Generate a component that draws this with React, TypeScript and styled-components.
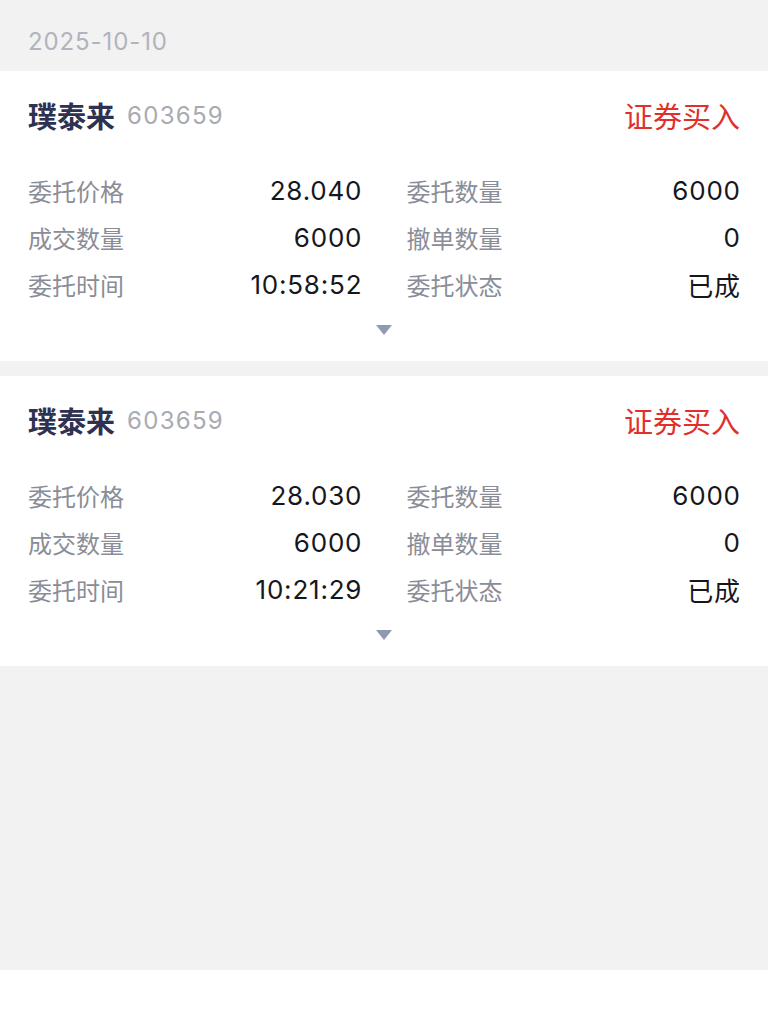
import { FunctionComponent } from "react";
import styled, { createGlobalStyle } from "styled-components";

const GlobalStyle = createGlobalStyle`
  html, body {
    margin: 0;
    padding: 0;
    background: #f2f2f2;
  }
  * {
    box-sizing: border-box;
  }
  body {
    font-family: Inter, "Noto Sans CJK SC", sans-serif;
    -webkit-font-smoothing: antialiased;
  }
`;

type Order = {
  name: string;
  code: string;
  side: string;
  price: string;
  amount: string;
  filled: string;
  cancelled: string;
  time: string;
  status: string;
};

const ORDERS: Order[] = [
  {
    name: "璞泰来",
    code: "603659",
    side: "证券买入",
    price: "28.040",
    amount: "6000",
    filled: "6000",
    cancelled: "0",
    time: "10:58:52",
    status: "已成",
  },
  {
    name: "璞泰来",
    code: "603659",
    side: "证券买入",
    price: "28.030",
    amount: "6000",
    filled: "6000",
    cancelled: "0",
    time: "10:21:29",
    status: "已成",
  },
];

const OrderCard: FunctionComponent<{ order: Order }> = ({ order }) => {
  const fields = [
    ["委托价格", order.price],
    ["委托数量", order.amount],
    ["成交数量", order.filled],
    ["撤单数量", order.cancelled],
    ["委托时间", order.time],
    ["委托状态", order.status],
  ];

  return (
    <Styles.Card>
      <Styles.Header>
        <Styles.Stock>
          <Styles.Name>{order.name}</Styles.Name>
          <Styles.Code>{order.code}</Styles.Code>
        </Styles.Stock>
        <Styles.Side>{order.side}</Styles.Side>
      </Styles.Header>
      <Styles.Grid>
        {fields.map(([label, value]) => (
          <Styles.Field key={label}>
            <Styles.Label>{label}</Styles.Label>
            <Styles.Value>{value}</Styles.Value>
          </Styles.Field>
        ))}
      </Styles.Grid>
      <Styles.Expand>
        <Styles.Caret />
      </Styles.Expand>
    </Styles.Card>
  );
};

export default function App() {
  return (
    <>
      <GlobalStyle />
      <Styles.Page>
        <Styles.DateBar>2025-10-10</Styles.DateBar>
        <Styles.List>
          {ORDERS.map((order, i) => (
            <OrderCard key={i} order={order} />
          ))}
        </Styles.List>
        <Styles.Spacer />
        <Styles.Footer />
      </Styles.Page>
    </>
  );
}

const Styles = {
  Page: styled.div`
    min-height: 1030px;
    display: flex;
    flex-direction: column;
    background: #f2f2f2;
  `,

  DateBar: styled.div`
    height: 71px;
    padding: 27px 28px 0;
    font-size: 24px;
    line-height: 30px;
    letter-spacing: 0.9px;
    color: #b1b4bc;
  `,

  List: styled.div`
    display: flex;
    flex-direction: column;
    gap: 15px;
  `,

  Card: styled.div`
    background: #ffffff;
    padding: 24px 28px 26px;
  `,

  Header: styled.div`
    height: 40px;
    display: flex;
    align-items: center;
    justify-content: space-between;
  `,

  Stock: styled.div`
    display: flex;
    align-items: center;
    gap: 12px;
  `,

  Name: styled.span`
    font-size: 29px;
    font-weight: 600;
    color: #2e3250;
  `,

  Code: styled.span`
    font-size: 24px;
    letter-spacing: 1.3px;
    color: #a8abb2;
  `,

  Side: styled.span`
    font-size: 29px;
    color: #e0302b;
  `,

  Grid: styled.div`
    margin-top: 32px;
    display: grid;
    grid-template-columns: 1fr 1fr;
    grid-auto-rows: 47px;
    column-gap: 45px;
  `,

  Field: styled.div`
    display: flex;
    align-items: center;
    justify-content: space-between;
  `,

  Label: styled.span`
    font-size: 24px;
    color: #8a8d97;
  `,

  Value: styled.span`
    font-size: 26px;
    letter-spacing: 0.8px;
    margin-right: -0.8px;
    color: #16171d;
  `,

  Expand: styled.div`
    margin-top: 17px;
    height: 10px;
    display: flex;
    justify-content: center;
    align-items: center;
  `,

  Caret: styled.div`
    width: 0;
    height: 0;
    border-left: 8px solid transparent;
    border-right: 8px solid transparent;
    border-top: 10px solid #8f9ab2;
  `,

  Spacer: styled.div`
    flex: 1;
  `,

  Footer: styled.div`
    height: 60px;
    background: #ffffff;
  `,
};
